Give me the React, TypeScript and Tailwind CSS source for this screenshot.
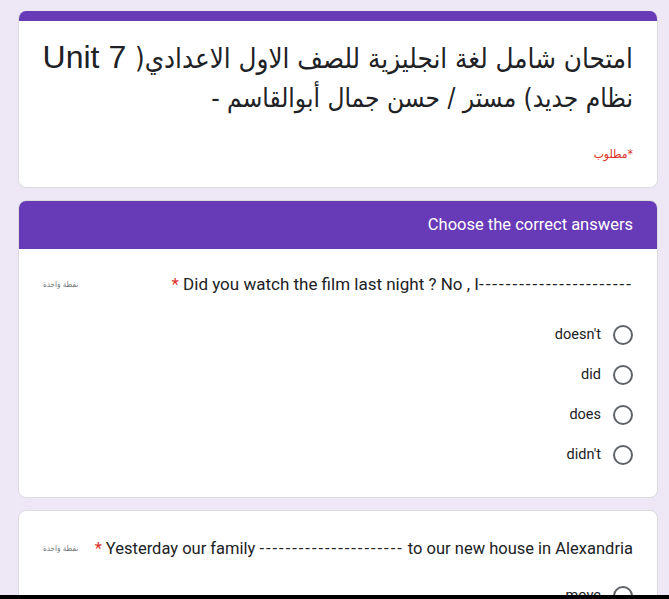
import React from 'react';

const OPTIONS = ["doesn't", 'did', 'does', "didn't"];

function Radio() {
  return <span className="w-5 h-5 rounded-full border-2 border-[#5f6368] shrink-0" />;
}

function PointsLabel() {
  return (
    <span dir="rtl" className="text-[8px] text-[#70757a] font-['DejaVu_Sans_Condensed','DejaVu_Sans',sans-serif] shrink-0">
      نقطة واحدة
    </span>
  );
}

function Dashes({ n }: { n: number }) {
  return <span className="tracking-[2px]">{'-'.repeat(n)}</span>;
}

export default function App() {
  return (
    <div className="h-[599px] flex flex-col bg-[#ede7f6] overflow-hidden font-[Roboto,'DejaVu_Sans',sans-serif]">
      <div className="flex-1 min-h-0 overflow-hidden pt-[11px] pl-[18px] flex flex-col gap-3">
        {/* Title card */}
        <div className="w-[640px] shrink-0 rounded-lg bg-white border border-t-0 border-[#dadce0] overflow-hidden">
          <div className="h-[10px] bg-[#673ab7]" />
          <div dir="rtl" className="px-6 pt-4 pb-6">
            <div className="text-[27.5px] leading-[40px] text-[#202124] font-['DejaVu_Sans_Condensed','DejaVu_Sans',sans-serif] whitespace-nowrap">
              <div>
                امتحان شامل لغة انجليزية للصف الاول الاعدادي(
                <span className="text-[32px] font-['Liberation_Sans',sans-serif]"> Unit 7</span>
              </div>
              <div className="text-[26px]">نظام جديد) مستر / حسن جمال أبوالقاسم -</div>
            </div>
            <div className="mt-[27px] text-[12px] text-[#d93025] font-['DejaVu_Sans_Condensed','DejaVu_Sans',sans-serif]">*مطلوب</div>
          </div>
        </div>

        {/* Section + first question */}
        <div className="w-[640px] shrink-0 rounded-lg bg-white border border-[#dadce0] overflow-hidden">
          <div className="h-12 bg-[#673ab7] flex items-center justify-end px-6 text-white text-[16.5px]">
            Choose the correct answers
          </div>
          <div className="px-6 pt-6 pb-[22px]">
            <div className="flex items-center justify-between h-6">
              <PointsLabel />
              <span className="text-[17px] text-[#202124] whitespace-nowrap">
                <span className="text-[#d93025]">*</span> Did you watch the film last night ? No , I<Dashes n={23} />
              </span>
            </div>
            <div className="mt-[18px] flex flex-col items-end">
              {OPTIONS.map(o => (
                <div key={o} className="h-10 flex items-center gap-3 text-[14.5px] text-[#202124]">
                  <span>{o}</span>
                  <Radio />
                </div>
              ))}
            </div>
          </div>
        </div>

        {/* Second question */}
        <div className="w-[640px] shrink-0 rounded-lg bg-white border border-[#dadce0] overflow-hidden">
          <div className="px-6 pt-[26px] pb-6">
            <div className="flex items-center justify-between h-6 gap-2">
              <PointsLabel />
              <span className="text-[16.5px] text-[#202124] whitespace-nowrap">
                <span className="text-[#d93025]">*</span> Yesterday our family <Dashes n={22} /> to our new house in Alexandria
              </span>
            </div>
            <div className="mt-[15px] flex flex-col items-end">
              <div className="h-10 flex items-center gap-3 text-[14.5px] text-[#202124]">
                <span>move</span>
                <Radio />
              </div>
            </div>
          </div>
        </div>
      </div>
      <div className="h-1 bg-black shrink-0" />
    </div>
  );
}
